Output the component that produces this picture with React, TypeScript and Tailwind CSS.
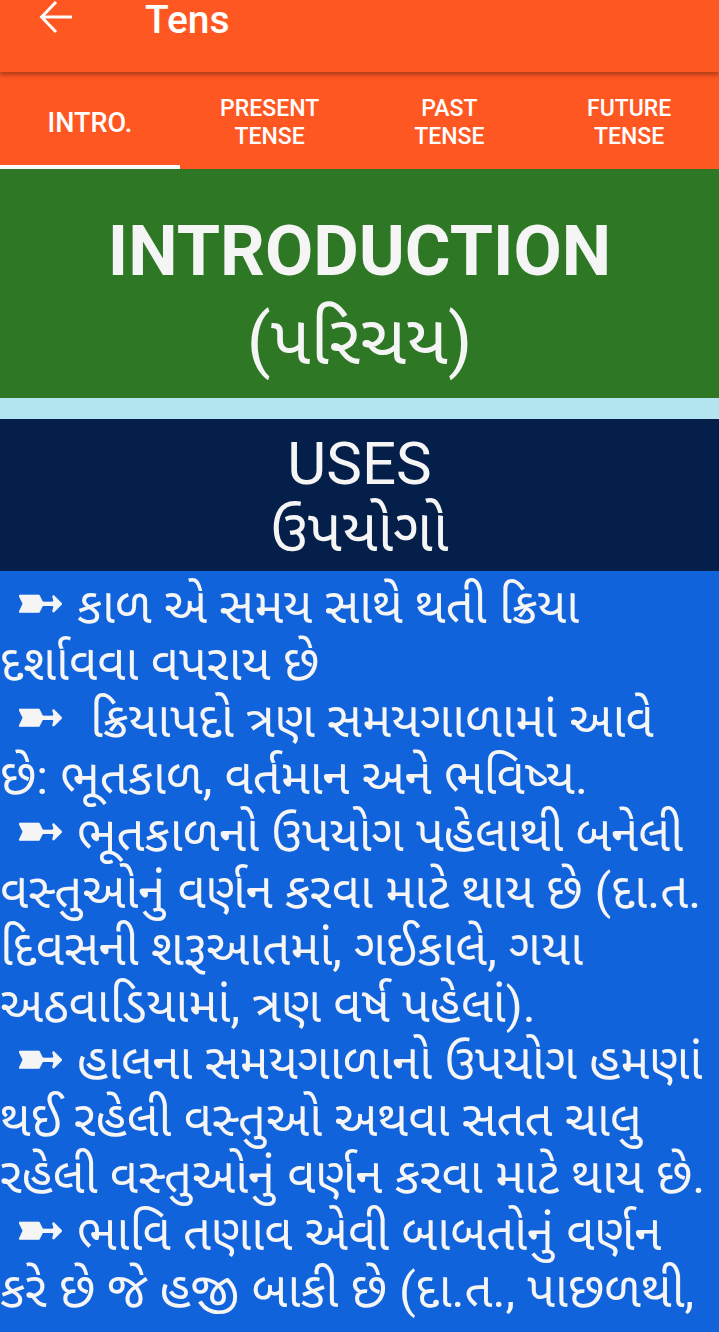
import React from "react";

const lines: { bullet?: boolean; gap?: boolean; text: string }[] = [
  { bullet: true, text: "કાળ એ સમય સાથે થતી ક્રિયા" },
  { text: "દર્શાવવા વપરાય છે" },
  { bullet: true, gap: true, text: "ક્રિયાપદો ત્રણ સમયગાળામાં આવે" },
  { text: "છે: ભૂતકાળ, વર્તમાન અને ભવિષ્ય." },
  { bullet: true, text: "ભૂતકાળનો ઉપયોગ પહેલાથી બનેલી" },
  { text: "વસ્તુઓનું વર્ણન કરવા માટે થાય છે (દા.ત." },
  { text: "દિવસની શરૂઆતમાં, ગઈકાલે, ગયા" },
  { text: "અઠવાડિયામાં, ત્રણ વર્ષ પહેલાં)." },
  { bullet: true, text: "હાલના સમયગાળાનો ઉપયોગ હમણાં" },
  { text: "થઈ રહેલી વસ્તુઓ અથવા સતત ચાલુ" },
  { text: "રહેલી વસ્તુઓનું વર્ણન કરવા માટે થાય છે." },
  { bullet: true, text: "ભાવિ તણાવ એવી બાબતોનું વર્ણન" },
  { text: "કરે છે જે હજી બાકી છે (દા.ત., પાછળથી," },
];

export default function App() {
  return (
    <div
      className="w-[719px] h-[1332px] overflow-hidden bg-[#1163dc] text-[#f5f5f5]"
      style={{ fontFamily: '"Roboto", "Noto Sans Gujarati", "Noto Sans", sans-serif' }}
    >
      {/* App bar */}
      <div className="relative z-10 h-[72px] bg-[#ff5722] shadow-[0_3px_4px_rgba(0,0,0,0.3)] flex items-start">
        <svg
          className="ml-[32px] mt-[-7px]"
          width="48"
          height="48"
          viewBox="0 0 24 24"
          fill="none"
          stroke="#ffffff"
          strokeWidth="1.5"
          strokeLinecap="butt"
        >
          <path d="M20 12H5" />
          <path d="M12 4.5 4.8 12l7.2 7.5" />
        </svg>
        <div className="ml-[65px] text-[39px] font-medium leading-[40px] text-white">Tens</div>
      </div>

      {/* Tabs */}
      <div className="h-[97px] bg-[#ff5722] grid grid-cols-4 text-white font-medium text-[23px] leading-[28px]">
        <div className="relative flex items-center justify-center pt-[4px]">
          <span className="text-[27px]">INTRO.</span>
          <div className="absolute bottom-0 left-0 right-0 h-[4px] bg-white" />
        </div>
        <div className="flex items-center justify-center text-center pt-[4px]">
          <span>PRESENT<br />TENSE</span>
        </div>
        <div className="flex items-center justify-center text-center pt-[4px]">
          <span>PAST<br />TENSE</span>
        </div>
        <div className="flex items-center justify-center text-center pt-[4px]">
          <span>FUTURE<br />TENSE</span>
        </div>
      </div>

      {/* Intro heading */}
      <div className="h-[229px] bg-[#2e7825] flex flex-col items-center">
        <div className="mt-[40px] text-[70px] font-bold leading-[84px]">INTRODUCTION</div>
        <div className="mt-[2px] text-[70px] leading-[90px]">(પરિચય)</div>
      </div>

      <div className="h-[21px] bg-[#b2e5ef]" />

      {/* Uses */}
      <div className="h-[152px] bg-[#051f4b] flex flex-col items-center">
        <div className="mt-[10px] text-[60px] leading-[70px]">USES</div>
        <div className="mt-[-4px] text-[60px] leading-[72px]">ઉપયોગો</div>
      </div>

      {/* Body */}
      <div className="text-[49px] leading-[57px] whitespace-nowrap pt-[7px]">
        {lines.map((l, i) => (
          <div key={i} className="h-[57px]">
            {l.bullet ? (
              <span>
                <span
                  style={{ fontFamily: '"DejaVu Sans", sans-serif' }}
                  className={`inline-block ml-[14px] text-[62px] leading-[44px] ${l.gap ? "mr-[24px]" : "mr-[11px]"}`}
                >
                  ➼
                </span>
                {l.text}
              </span>
            ) : (
              l.text
            )}
          </div>
        ))}
      </div>
    </div>
  );
}
